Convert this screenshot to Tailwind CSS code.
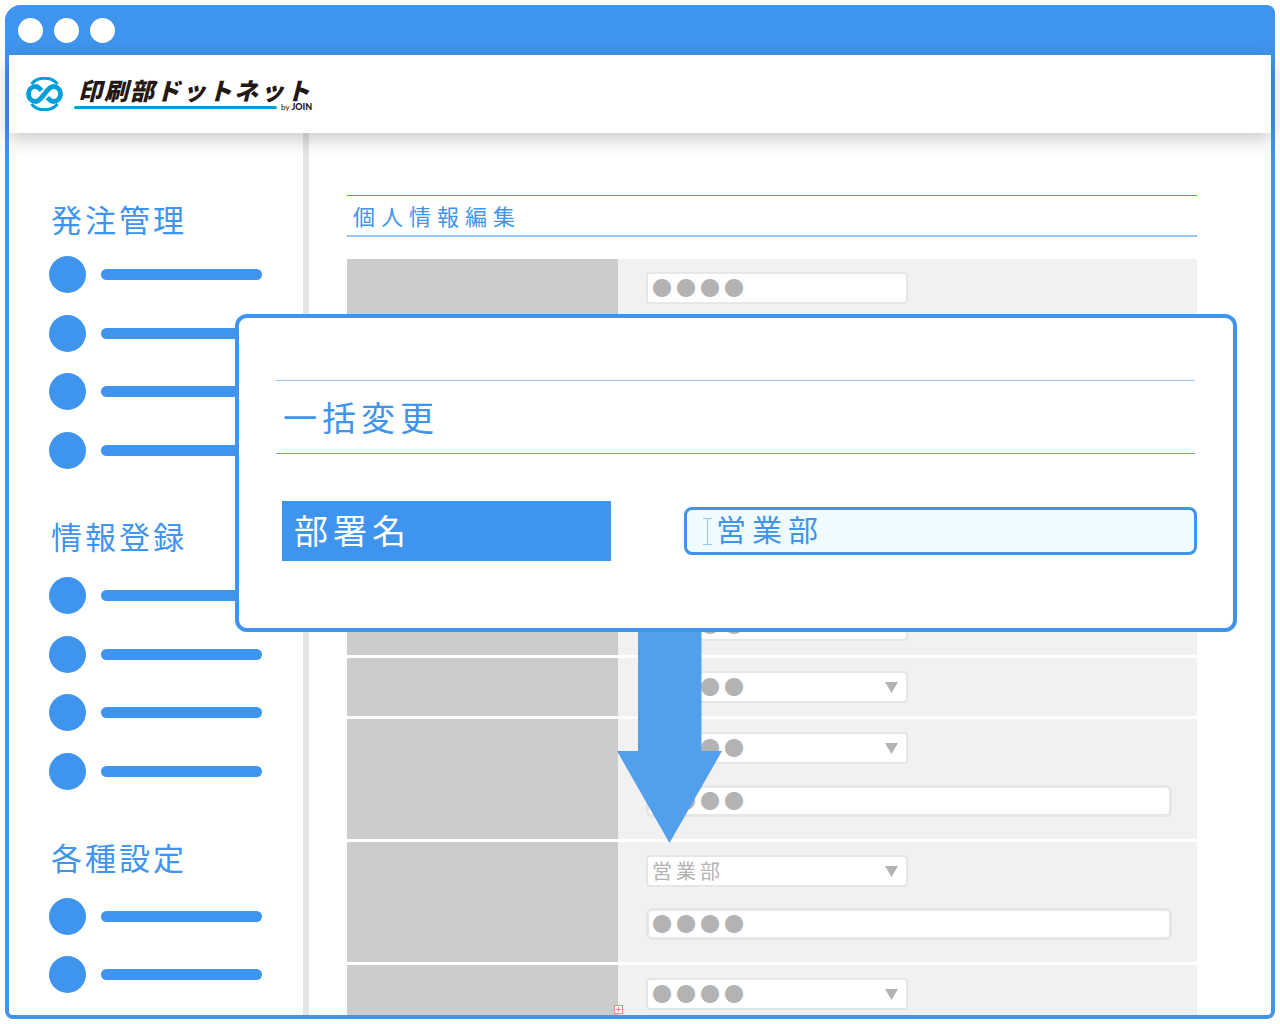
<!DOCTYPE html>
<html lang="ja">
<head>
<meta charset="utf-8">
<meta name="viewport" content="width=device-width, initial-scale=1">
<title>個人情報編集</title>
<script src="https://cdn.jsdelivr.net/npm/@tailwindcss/browser@4"></script>
</head>
<body class="relative flex h-screen flex-col overflow-hidden bg-white p-[5px] font-['Noto_Sans_CJK_JP',sans-serif] font-normal text-[#3f94ed]">

<div class="flex min-h-0 flex-1 flex-col rounded-t-2xl rounded-b-lg border-4 border-t-0 border-[#3f94ed] bg-white">
  <!-- Title bar -->
  <div class="-mx-1 flex h-[50px] shrink-0 items-center gap-[11px] rounded-tl-2xl rounded-tr-lg bg-[#3f94ed] pl-[13px]">
    <span class="size-[25px] rounded-full bg-white"></span>
    <span class="size-[25px] rounded-full bg-white"></span>
    <span class="size-[25px] rounded-full bg-white"></span>
  </div>

  <!-- Header -->
  <header class="relative z-10 flex h-[78px] shrink-0 items-center bg-white pl-[17px] shadow-[0_6px_18px_rgba(0,0,0,0.22)]">
    <a href="#" class="flex items-center gap-[11px]">
      <svg class="h-[34px] w-[37px]" viewBox="0 0 37 34" fill="none" stroke="#009fd9" aria-hidden="true">
        <path d="M5.500 7C12 -0.800 25 -0.800 31.500 7" stroke-width="3"/>
        <path d="M5.500 27C12 34.800 25 34.800 31.500 27" stroke-width="3"/>
        <path d="M15.500 13.500C13 10.500 12 9.500 9.800 9.500C5.600 9.500 2.500 12.800 2.500 17C2.500 21.200 5.600 24.500 9.800 24.500C12.500 24.500 14.500 22.500 18.500 17C22.500 11.500 24.500 9.500 27.200 9.500C31.400 9.500 34.500 12.800 34.500 17C34.500 21.200 31.400 24.500 27.200 24.500C25 24.500 24 23.500 21.500 20.500" stroke-width="4.800"/>
      </svg>
      <span class="flex flex-col">
        <span class="pl-1 text-[24px] leading-[26px] font-black tracking-[2px] text-[#231815] italic">印刷部ドットネット</span>
        <span class="flex h-2 items-center gap-1">
          <span class="h-[3px] w-[203px] rounded-full bg-[#009fd9]"></span>
          <span class="font-['Lato',sans-serif] text-[8px] leading-[8px] font-medium text-[#231815]">by <b class="text-[9px] font-black">JOIN</b></span>
        </span>
      </span>
    </a>
  </header>

  <div class="flex min-h-0 flex-1 overflow-hidden">
    <!-- Sidebar -->
    <nav class="flex w-[300px] shrink-0 flex-col gap-[47px] border-r-6 border-[#e5e5e5] pt-[66px] pl-10">
      <section>
        <h2 class="pl-[2px] text-[31px] leading-10 tracking-[3px]">発注管理</h2>
        <ul class="mt-[17px] flex h-[213px] flex-col justify-between">
          <li><a href="#" aria-label="発注管理 1" class="flex items-center gap-[15px]"><span class="size-[37px] rounded-full bg-[#3f94ed]"></span><span class="h-[11px] w-[161px] rounded-full bg-[#3f94ed]"></span></a></li>
          <li><a href="#" aria-label="発注管理 2" class="flex items-center gap-[15px]"><span class="size-[37px] rounded-full bg-[#3f94ed]"></span><span class="h-[11px] w-[161px] rounded-full bg-[#3f94ed]"></span></a></li>
          <li><a href="#" aria-label="発注管理 3" class="flex items-center gap-[15px]"><span class="size-[37px] rounded-full bg-[#3f94ed]"></span><span class="h-[11px] w-[161px] rounded-full bg-[#3f94ed]"></span></a></li>
          <li><a href="#" aria-label="発注管理 4" class="flex items-center gap-[15px]"><span class="size-[37px] rounded-full bg-[#3f94ed]"></span><span class="h-[11px] w-[161px] rounded-full bg-[#3f94ed]"></span></a></li>
        </ul>
      </section>
      <section>
        <h2 class="pl-[2px] text-[31px] leading-10 tracking-[3px]">情報登録</h2>
        <ul class="mt-[21px] flex h-[213px] flex-col justify-between">
          <li><a href="#" aria-label="情報登録 1" class="flex items-center gap-[15px]"><span class="size-[37px] rounded-full bg-[#3f94ed]"></span><span class="h-[11px] w-[161px] rounded-full bg-[#3f94ed]"></span></a></li>
          <li><a href="#" aria-label="情報登録 2" class="flex items-center gap-[15px]"><span class="size-[37px] rounded-full bg-[#3f94ed]"></span><span class="h-[11px] w-[161px] rounded-full bg-[#3f94ed]"></span></a></li>
          <li><a href="#" aria-label="情報登録 3" class="flex items-center gap-[15px]"><span class="size-[37px] rounded-full bg-[#3f94ed]"></span><span class="h-[11px] w-[161px] rounded-full bg-[#3f94ed]"></span></a></li>
          <li><a href="#" aria-label="情報登録 4" class="flex items-center gap-[15px]"><span class="size-[37px] rounded-full bg-[#3f94ed]"></span><span class="h-[11px] w-[161px] rounded-full bg-[#3f94ed]"></span></a></li>
        </ul>
      </section>
      <section>
        <h2 class="pl-[2px] text-[31px] leading-10 tracking-[3px]">各種設定</h2>
        <ul class="mt-[21px] flex flex-col gap-[21px]">
          <li><a href="#" aria-label="各種設定 1" class="flex items-center gap-[15px]"><span class="size-[37px] rounded-full bg-[#3f94ed]"></span><span class="h-[11px] w-[161px] rounded-full bg-[#3f94ed]"></span></a></li>
          <li><a href="#" aria-label="各種設定 2" class="flex items-center gap-[15px]"><span class="size-[37px] rounded-full bg-[#3f94ed]"></span><span class="h-[11px] w-[161px] rounded-full bg-[#3f94ed]"></span></a></li>
        </ul>
      </section>
    </nav>

    <!-- Record form -->
    <main class="min-w-0 flex-1 pt-[62px] pr-[74px] pl-[38px]">
      <h1 class="border-t border-b-2 border-t-[#3f94ed] border-b-[#97c6f7] pl-[6px] text-[22px] leading-[39px] tracking-[6px]">個人情報編集</h1>
      <form class="mt-[22px] flex flex-col gap-[3px] text-[#b3b3b3]">
        <div class="flex h-[58px]">
          <div class="w-[271px] shrink-0 bg-[#ccc]"></div>
          <div class="flex-1 bg-[#f1f1f1] pt-[13px] pl-7">
            <input type="text" aria-label="項目1" value="●●●●" class="block h-8 w-[262px] rounded border-2 border-[#e6e6e6] bg-white pb-px pl-1 text-[20px] leading-6 tracking-[4px]">
          </div>
        </div>
        <div class="flex h-[273px]">
          <div class="w-[271px] shrink-0 bg-[#ccc]"></div>
          <div class="flex-1 bg-[#f1f1f1]"></div>
        </div>
        <div class="flex h-[59px]">
          <div class="w-[271px] shrink-0 bg-[#ccc]"></div>
          <div class="flex-1 bg-[#f1f1f1] pt-[13px] pl-7">
            <input type="text" aria-label="項目2" value="●●●●" class="block h-8 w-[262px] rounded border-2 border-[#e6e6e6] bg-white pb-px pl-1 text-[20px] leading-6 tracking-[4px]">
          </div>
        </div>
        <div class="flex h-[58px]">
          <div class="w-[271px] shrink-0 bg-[#ccc]"></div>
          <div class="flex-1 bg-[#f1f1f1] pt-[13px] pl-7">
            <div class="relative w-[262px]">
              <select aria-label="項目3" class="block h-8 w-full appearance-none rounded border-2 border-[#e6e6e6] bg-white pb-px pl-1 text-[20px] leading-6 tracking-[4px]"><option>●●●●</option></select>
              <svg class="absolute top-[11px] right-[10px] h-[11px] w-[13px]" viewBox="0 0 13 11" fill="#b3b3b3" aria-hidden="true"><path d="M0 0H13L6.500 11Z"/></svg>
            </div>
          </div>
        </div>
        <div class="flex h-[120px]">
          <div class="w-[271px] shrink-0 bg-[#ccc]"></div>
          <div class="flex flex-1 flex-col gap-[21px] bg-[#f1f1f1] pt-[13px] pr-[25px] pl-7">
            <div class="relative w-[262px]">
              <select aria-label="項目4" class="block h-8 w-full appearance-none rounded border-2 border-[#e6e6e6] bg-white pb-px pl-1 text-[20px] leading-6 tracking-[4px]"><option>●●●●</option></select>
              <svg class="absolute top-[11px] right-[10px] h-[11px] w-[13px]" viewBox="0 0 13 11" fill="#b3b3b3" aria-hidden="true"><path d="M0 0H13L6.500 11Z"/></svg>
            </div>
            <input type="text" aria-label="項目4 詳細" value="●●●●" class="block h-8 w-full rounded-md border-3 border-[#e6e6e6] bg-white pb-px pl-[3px] text-[20px] leading-6 tracking-[4px]">
          </div>
        </div>
        <div class="flex h-[120px]">
          <div class="w-[271px] shrink-0 bg-[#ccc]"></div>
          <div class="flex flex-1 flex-col gap-[21px] bg-[#f1f1f1] pt-[13px] pr-[25px] pl-7">
            <div class="relative w-[262px]">
              <select aria-label="部署名" class="block h-8 w-full appearance-none rounded border-2 border-[#e6e6e6] bg-white pl-1 text-[20px] leading-6 tracking-[4px]"><option>営業部</option></select>
              <svg class="absolute top-[11px] right-[10px] h-[11px] w-[13px]" viewBox="0 0 13 11" fill="#b3b3b3" aria-hidden="true"><path d="M0 0H13L6.500 11Z"/></svg>
            </div>
            <input type="text" aria-label="部署名 詳細" value="●●●●" class="block h-8 w-full rounded-md border-3 border-[#e6e6e6] bg-white pb-px pl-[3px] text-[20px] leading-6 tracking-[4px]">
          </div>
        </div>
        <div class="relative flex h-[58px]">
          <div class="w-[271px] shrink-0 bg-[#ccc]"></div>
          <div class="flex-1 bg-[#f1f1f1] pt-[13px] pl-7">
            <div class="relative w-[262px]">
              <select aria-label="項目6" class="block h-8 w-full appearance-none rounded border-2 border-[#e6e6e6] bg-white pb-px pl-1 text-[20px] leading-6 tracking-[4px]"><option>●●●●</option></select>
              <svg class="absolute top-[11px] right-[10px] h-[11px] w-[13px]" viewBox="0 0 13 11" fill="#b3b3b3" aria-hidden="true"><path d="M0 0H13L6.500 11Z"/></svg>
            </div>
          </div>
          <!-- Overflow marker on the column edge -->
          <svg class="absolute top-10 left-[267px] size-[9px]" viewBox="0 0 9 9" fill="none" stroke="#ff8080" aria-hidden="true"><rect x="0.500" y="0.500" width="8" height="8" fill="#fff"/><path d="M4.500 2V7M2 4.500H7"/></svg>
        </div>
      </form>
    </main>
  </div>
</div>

<!-- Arrow from the dialog to the updated field -->
<svg class="absolute top-[630px] left-[617px] z-20 h-[213px] w-[105px]" viewBox="0 0 105 213" fill="#529fec" aria-hidden="true"><path d="M21 0H84.500V121H105L52.500 213L0 121H21Z"/></svg>

<!-- Bulk edit dialog -->
<div role="dialog" aria-labelledby="bulk-title" class="absolute top-[314px] right-[43px] left-[235px] z-30 h-[318px] rounded-xl border-4 border-[#3f94ed] bg-white pt-[62px] pr-9 pl-[37px]">
  <h2 id="bulk-title" class="mr-[2px] border-y border-t-[#97c6f7] border-b-[#6aabee] pl-[7px] text-[34px] leading-[72px] tracking-[5px]">一括変更</h2>
  <div class="mt-[47px] flex items-center gap-[73px] pl-[6px]">
    <label for="dept" class="h-[60px] w-[329px] shrink-0 bg-[#3f94ed] pl-3 text-[34px] leading-[58px] tracking-[5px] text-white">部署名</label>
    <div class="flex h-12 min-w-0 flex-1 items-center gap-1 rounded-lg border-3 border-[#3f94ed] bg-[#effbff] pl-4">
      <svg class="h-[27px] w-[9px] shrink-0" viewBox="0 0 9 27" fill="none" stroke="#97c6f7" aria-hidden="true"><path d="M0 0.500H9M0 26.500H9M4.500 0.500V26.500"/></svg>
      <input id="dept" type="text" value="営業部" class="h-full min-w-0 flex-1 bg-transparent pb-[6px] text-[30px] leading-9 tracking-[6px] outline-none">
    </div>
  </div>
</div>
</body>
</html>
